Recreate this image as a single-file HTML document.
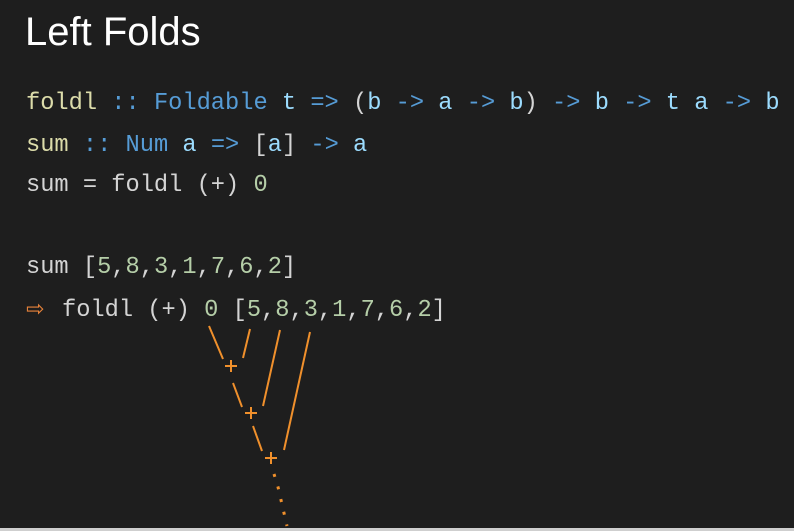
<!DOCTYPE html>
<html><head><meta charset="utf-8"><style>
html,body{margin:0;padding:0}
body{width:794px;height:531px;background:#1e1e1e;position:relative;overflow:hidden;font-family:"Liberation Mono",monospace}
.t{position:absolute;left:25px;top:10px;font:40px "Liberation Sans",sans-serif;color:#fff}
.l{position:absolute;left:26px;font-size:23.7px;line-height:30px;color:#d4d4d4;white-space:pre}
.y{color:#dcdcaa}.b{color:#569cd6}.v{color:#9cdcfe}.g{color:#b5cea8}.o{color:#e8833a}
.ar{display:inline-block;width:36px;font-family:"DejaVu Sans",sans-serif;font-size:22px;color:#e8833a}
.bot{position:absolute;left:0;right:0;bottom:0;height:3px;background:#cfcfcf}
</style></head><body>
<div class="t">Left Folds</div>
<div class="l" style="top:89px"><span class="y">foldl</span> <span class="b">::</span> <span class="b">Foldable</span> <span class="v">t</span> <span class="b">=&gt;</span> (<span class="v">b</span> <span class="b">-&gt;</span> <span class="v">a</span> <span class="b">-&gt;</span> <span class="v">b</span>) <span class="b">-&gt;</span> <span class="v">b</span> <span class="b">-&gt;</span> <span class="v">t</span> <span class="v">a</span> <span class="b">-&gt;</span> <span class="v">b</span></div>
<div class="l" style="top:131px"><span class="y">sum</span> <span class="b">::</span> <span class="b">Num</span> <span class="v">a</span> <span class="b">=&gt;</span> [<span class="v">a</span>] <span class="b">-&gt;</span> <span class="v">a</span></div>
<div class="l" style="top:171px">sum = foldl (+) <span class="g">0</span></div>
<div class="l" style="top:253px">sum [<span class="g">5</span>,<span class="g">8</span>,<span class="g">3</span>,<span class="g">1</span>,<span class="g">7</span>,<span class="g">6</span>,<span class="g">2</span>]</div>
<div class="l" style="top:295px"><span class="ar">⇨</span>foldl (+) <span class="g">0</span> [<span class="g">5</span>,<span class="g">8</span>,<span class="g">3</span>,<span class="g">1</span>,<span class="g">7</span>,<span class="g">6</span>,<span class="g">2</span>]</div>
<svg width="794" height="531" style="position:absolute;left:0;top:0" stroke="#f0902c" stroke-width="2" fill="none">
<line x1="209" y1="326" x2="223" y2="359"/>
<line x1="250" y1="329" x2="243" y2="358"/>
<line x1="233" y1="383" x2="242" y2="407"/>
<line x1="280" y1="330" x2="263" y2="406"/>
<line x1="253" y1="426" x2="262" y2="451"/>
<line x1="310" y1="332" x2="284" y2="450"/>
<path d="M225 366h12M231 360v12M245 413h12M251 407v12M265 458h12M271 452v12"/>
<path d="M274 474l4 13 3 13 3 13 3 13" stroke-dasharray="3 10" stroke-width="3"/>
</svg>
<div class="bot"></div>
</body></html>
